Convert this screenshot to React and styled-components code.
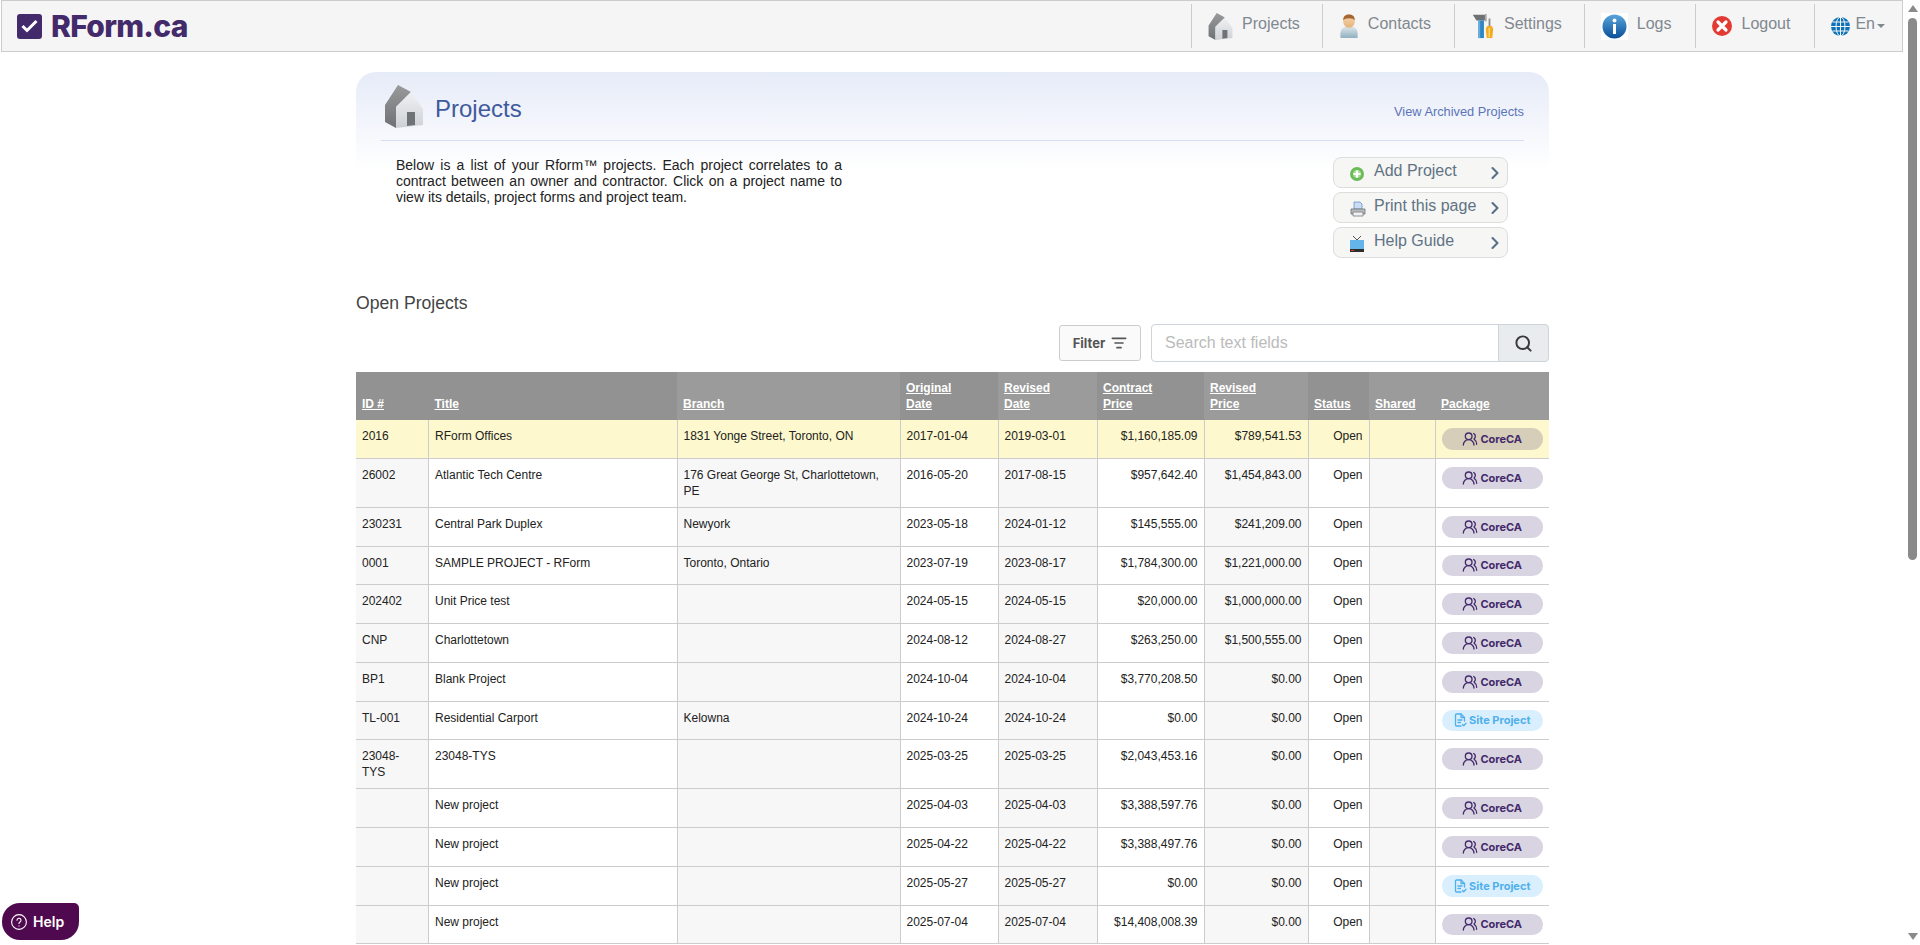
import React from 'react';
import styled, { createGlobalStyle } from 'styled-components';
import { ChevronRight, ListFilter, Search, UsersRound } from 'lucide-react';

const GlobalStyle = createGlobalStyle`
  body {
    margin: 0;
    background: #fff;
    font-family: "Liberation Sans", Arial, sans-serif;
    color: #222;
  }
`;

const Page = styled.div`
  min-height: 1600px;
  padding-right: 15px;
`;

const ScrollRail = styled.div`
  position: fixed;
  top: 0;
  right: 0;
  bottom: 0;
  display: flex;
  flex-direction: column;
  align-items: center;
  justify-content: space-between;
  box-sizing: border-box;
  width: 15px;
  padding: 5px 0;
  background: #fff;
`;

const ScrollThumb = styled.div`
  width: 9px;
  height: 542px;
  margin-bottom: auto;
  margin-top: 6px;
  border-radius: 5px;
  background: #8a8a8a;
`;

const ScrollArrow = styled.div`
  flex: none;
  width: 0;
  height: 0;
  border-left: 5px solid transparent;
  border-right: 5px solid transparent;
  border-bottom: ${props => (props.$down ? '0' : '7px solid #8a8a8a')};
  border-top: ${props => (props.$down ? '7px solid #8a8a8a' : '0')};
`;

const NavBar = styled.nav`
  display: flex;
  align-items: center;
  justify-content: space-between;
  box-sizing: border-box;
  height: 52px;
  margin: 0 2px 0 1px;
  background: #f5f5f5;
  border: 1px solid #ccc;
`;

const Logo = styled.a`
  display: flex;
  align-items: center;
  gap: 9px;
  margin-left: 15px;
  color: #432a6b;
  font-family: Inter, sans-serif;
  font-size: 30px;
  font-weight: 800;
  letter-spacing: -0.7px;
`;

const LogoBox = styled.span`
  display: flex;
  align-items: center;
  justify-content: center;
  width: 25px;
  height: 25px;
  border-radius: 3px;
  background: #432a6b;
`;

const NavList = styled.div`
  display: flex;
  align-items: center;
`;

const NavItem = styled.a`
  display: flex;
  align-items: center;
  gap: ${props => props.$gap || 9}px;
  box-sizing: border-box;
  height: 44px;
  padding: 0 ${props => props.$right || 24}px 0 16px;
  border-left: 1px solid #ccc;
  color: #808890;
  font-size: 16px;
`;

const NavLabel = styled.span`
  margin-top: -4px;
`;

const Caret = styled.span`
  width: 0;
  height: 0;
  margin-left: -3px;
  border-left: 4px solid transparent;
  border-right: 4px solid transparent;
  border-top: 4px solid #808890;
`;

const Container = styled.main`
  width: 1193px;
  margin: 20px auto 0;
`;

const Panel = styled.section`
  padding: 0 25px;
  border-radius: 20px 20px 0 0;
  background: linear-gradient(#e6ebf8, #fff 98px);
`;

const PanelHead = styled.div`
  display: flex;
  align-items: center;
  justify-content: space-between;
  box-sizing: border-box;
  height: 69px;
  padding: 0 0 0 4px;
  border-bottom: 1px solid #d5dff7;
`;

const PanelTitle = styled.h1`
  display: flex;
  align-items: center;
  gap: 12px;
  margin: 0;
  color: #3f5a9c;
  font-size: 24px;
  font-weight: 400;
  span {
    margin-top: 6px;
  }
`;

const ArchiveLink = styled.a`
  margin-top: 11px;
  color: #5b74b8;
  font-size: 12.8px;
`;

const PanelBody = styled.div`
  display: flex;
  justify-content: space-between;
  padding: 16px 16px 0 15px;
`;

const Intro = styled.p`
  width: 446px;
  margin: 0;
  font-size: 14px;
  line-height: 16px;
  text-align: justify;
`;

const ActionList = styled.div`
  display: flex;
  flex-direction: column;
  gap: 4px;
`;

const ActionButton = styled.a`
  display: flex;
  align-items: center;
  box-sizing: border-box;
  width: 175px;
  height: 31px;
  padding: 0 2px 0 16px;
  border: 1px solid #ddd;
  border-radius: 8px;
  background: #f6f6f4;
  color: #5f7384;
  font-size: 16px;
`;

const ActionIcon = styled.span`
  display: flex;
  flex: none;
  width: 24px;
  margin-top: 2px;
`;

const ActionLabel = styled.span`
  flex: 1;
  margin-top: -4px;
`;

const SectionTitle = styled.h2`
  margin: 35px 0 0;
  color: #444;
  font-size: 17.6px;
  font-weight: 400;
  line-height: 20px;
`;

const Toolbar = styled.div`
  display: flex;
  align-items: center;
  justify-content: flex-end;
  gap: 10px;
  margin-top: 11px;
`;

const FilterButton = styled.button`
  display: flex;
  align-items: center;
  justify-content: center;
  gap: 6px;
  width: 82px;
  height: 36px;
  padding: 0;
  border: 1px solid #ccc;
  border-radius: 3px;
  background: #fafafa;
  color: #555;
  font-family: Inter, sans-serif;
  font-size: 13px;
  font-weight: 700;
`;

const SearchGroup = styled.div`
  display: flex;
  width: 398px;
  height: 38px;
`;

const SearchInput = styled.input`
  flex: 1;
  min-width: 0;
  box-sizing: border-box;
  padding: 0 13px;
  border: 1px solid #ced4da;
  border-radius: 4px 0 0 4px;
  font-family: "Liberation Sans", Arial, sans-serif;
  font-size: 16px;
  &::placeholder {
    color: #bbb;
  }
`;

const SearchButton = styled.button`
  display: flex;
  align-items: center;
  justify-content: center;
  width: 51px;
  margin-left: -1px;
  padding: 0;
  border: 1px solid #ced4da;
  border-radius: 0 4px 4px 0;
  background: #e9ecef;
  color: #3a3a3a;
`;

const Table = styled.table`
  width: 100%;
  margin-top: 10px;
  border-collapse: collapse;
  table-layout: fixed;
  font-size: 12px;
  line-height: 16px;
`;

const HeadCell = styled.th`
  padding: 8px 6px;
  background: ${props => (props.$dark ? '#929292' : '#9b9b9b')};
  color: #fff;
  font-weight: 700;
  text-align: left;
  text-decoration: underline;
  vertical-align: bottom;
`;

const Row = styled.tr`
  td {
    background: ${props => (props.$highlight ? '#fdf8cd' : '#fff')};
  }
  td:nth-child(odd) {
    background: ${props => (props.$highlight ? '#fdf8cd' : '#f7f7f7')};
  }
`;

const Cell = styled.td`
  padding: 8px 6px;
  border-bottom: 1px solid #ccc;
  border-left: 1px solid #ccc;
  text-align: ${props => (props.$right ? 'right' : 'left')};
  vertical-align: top;
  &:first-child {
    border-left: 0;
  }
`;

const Badge = styled.span`
  display: flex;
  align-items: center;
  justify-content: center;
  gap: 2px;
  height: 21.75px;
  border-radius: 11px;
  background: ${props => (props.$site ? '#d9effd' : 'rgba(67, 42, 107, 0.2)')};
  color: ${props => (props.$site ? '#4fb0ec' : '#432a6b')};
  font-family: Inter, sans-serif;
  font-size: 11px;
  font-weight: 700;
`;

const HelpButton = styled.button`
  position: fixed;
  left: 2px;
  bottom: 5px;
  display: flex;
  align-items: center;
  gap: 6px;
  width: 77px;
  height: 37px;
  padding: 0 0 0 9px;
  border: 0;
  border-radius: 18px 5px 18px 18px;
  background: #4f0a4f;
  color: #fff;
  font-family: Inter, sans-serif;
  font-size: 14px;
  font-weight: 600;
`;

const HouseIcon = ({ width, height }) => (
  <svg width={width} height={height} viewBox="0 0 38 43">
    <defs>
      <linearGradient id="houseDark" x1="0" y1="0" x2="0" y2="1">
        <stop offset="0" stopColor="#9a9a9c" />
        <stop offset="1" stopColor="#6e7174" />
      </linearGradient>
      <linearGradient id="houseLight" x1="0" y1="0" x2="0" y2="1">
        <stop offset="0" stopColor="#f0f1f3" />
        <stop offset="1" stopColor="#cdd1d6" />
      </linearGradient>
    </defs>
    <path d="M0 20 13 0l13 7-15 15v21L0 37z" fill="url(#houseDark)" />
    <path d="M11 22 26 7l12 17v16l-27 3z" fill="url(#houseLight)" />
    <path d="M22 27h8v13l-8 1z" fill="#6f7376" />
  </svg>
);

const PersonIcon = () => (
  <svg width="20" height="25" viewBox="0 0 21 28">
    <defs>
      <linearGradient id="personBody" x1="0" y1="0" x2="0" y2="1">
        <stop offset="0" stopColor="#dfe7ea" />
        <stop offset="1" stopColor="#8fb0bf" />
      </linearGradient>
      <linearGradient id="personSkin" x1="0" y1="0" x2="0" y2="1">
        <stop offset="0" stopColor="#f6d8ae" />
        <stop offset="1" stopColor="#e6b27c" />
      </linearGradient>
    </defs>
    <path d="M1 27c-1-8 1-12 6-13h7c5 1 7 5 6 13z" fill="url(#personBody)" />
    <ellipse cx="10.500" cy="8" rx="6.500" ry="7.500" fill="url(#personSkin)" />
    <path d="M4 7C4 2 7 .5 10.500.5S17 2 17 7c-2-3-11-3-13 0z" fill="#a5652f" />
  </svg>
);

const ToolsIcon = () => (
  <svg width="24" height="26" viewBox="0 0 24 28">
    <path d="M1 2h14v6H5z" fill="#6f7275" />
    <path d="M14 1h2v8h-2z" fill="#a9abad" />
    <path d="M7 8h6v19H7z" fill="#2f86c4" />
    <path d="M7 8h2v19H7z" fill="#66aedd" />
    <path d="M18 6h2v9h-2z" fill="#8d8f91" />
    <path d="M16.500 14h5l1.500 3-1 10h-6l-1-10z" fill="#f3ac1e" />
    <path d="M18 16h1.500v10H18z" fill="#fbd774" />
  </svg>
);

const InfoIcon = () => (
  <svg width="27" height="27" viewBox="0 0 27 27">
    <defs>
      <linearGradient id="infoBlue" x1="0" y1="0" x2="0" y2="1">
        <stop offset="0" stopColor="#5aa5dc" />
        <stop offset="1" stopColor="#0a4f98" />
      </linearGradient>
    </defs>
    <rect width="27" height="27" fill="#fff" />
    <circle cx="13.500" cy="13.500" r="12" fill="url(#infoBlue)" />
    <circle cx="13.500" cy="7.500" r="2" fill="#fff" />
    <path d="M12 11h3v10h-3z" fill="#fff" />
  </svg>
);

const LogoutIcon = () => (
  <svg width="20" height="20" viewBox="0 0 20 20">
    <circle cx="10" cy="10" r="10" fill="#e23b33" />
    <path d="m6 6 8 8M14 6l-8 8" stroke="#fff" strokeWidth="3.200" strokeLinecap="round" />
  </svg>
);

const GlobeIcon = () => (
  <svg width="19" height="19" viewBox="0 0 19 19" fill="none" stroke="#f5f5f5" strokeWidth="1">
    <circle cx="9.500" cy="9.500" r="9.500" fill="#0d72b8" stroke="none" />
    <ellipse cx="9.500" cy="9.500" rx="4.500" ry="9.500" />
    <path d="M9.500 0v19M0 9.500h19M1.500 5h16M1.500 14h16" />
  </svg>
);

const AddIcon = () => (
  <svg width="14" height="14" viewBox="0 0 14 14">
    <circle cx="7" cy="7" r="7" fill="#6cbb5a" />
    <circle cx="7" cy="7" r="4" fill="#a7dc97" />
    <path d="M5.900 3.500h2.200v2.400h2.400v2.200H8.100v2.400H5.900V8.100H3.500V5.900h2.400z" fill="#fff" />
  </svg>
);

const PrintIcon = () => (
  <svg width="16" height="16" viewBox="0 0 16 16">
    <path d="M4 1h6l2 2v5H4z" fill="#c9dcf5" stroke="#6c8fc0" strokeWidth="0.800" />
    <path d="M1 8h14v5H1z" fill="#b9bcc0" stroke="#6d6f72" strokeWidth="0.800" />
    <path d="M3 11h10v4H3z" fill="#f0f1f3" stroke="#77797c" strokeWidth="0.800" />
  </svg>
);

const GuideIcon = () => (
  <svg width="14" height="16" viewBox="0 0 14 16">
    <path d="m3 0 4 4 4-4" fill="none" stroke="#555" strokeWidth="1" />
    <path d="M0 4h14v12H0z" fill="#63b5ea" />
    <path d="M0 13h14v3H0z" fill="#2d2d2d" />
    <path d="M1 14h3v1H1z" fill="#d33" />
  </svg>
);

const SiteIcon = () => (
  <svg width="13" height="14" viewBox="0 0 13 14" fill="none" stroke="currentColor" strokeWidth="1.300" strokeLinecap="round" strokeLinejoin="round">
    <path d="M7 13H2.500A1 1 0 0 1 1.500 12V2a1 1 0 0 1 1-1H7l3.500 3.500V8" />
    <path d="M7 1v3.500h3.500M4 7h4M4 9.500h2.500M8.500 11.500l1.200 1.200 2.300-2.400" />
  </svg>
);

const navItems = [
  { label: 'Projects', right: 22, icon: <HouseIcon width={25} height={27} /> },
  { label: 'Contacts', right: 23, icon: <PersonIcon /> },
  { label: 'Settings', right: 22, icon: <ToolsIcon /> },
  { label: 'Logs', right: 24, icon: <InfoIcon /> },
  { label: 'Logout', right: 24, icon: <LogoutIcon /> },
];

const actions = [
  { label: 'Add Project', icon: <AddIcon /> },
  { label: 'Print this page', icon: <PrintIcon /> },
  { label: 'Help Guide', icon: <GuideIcon /> },
];

const columns = [
  { width: 72.5, lines: ['ID #'], dark: true },
  { width: 248.5, lines: ['Title'], dark: true },
  { width: 223, lines: ['Branch'] },
  { width: 98, lines: ['Original', 'Date'], dark: true },
  { width: 99, lines: ['Revised', 'Date'] },
  { width: 107, lines: ['Contract', 'Price'], dark: true },
  { width: 104, lines: ['Revised', 'Price'] },
  { width: 61, lines: ['Status'], dark: true },
  { width: 66, lines: ['Shared'] },
  { width: 114, lines: ['Package'] },
];

const projects = [
  ['2016', 'RForm Offices', '1831 Yonge Street, Toronto, ON', '2017-01-04', '2019-03-01', '$1,160,185.09', '$789,541.53'],
  ['26002', 'Atlantic Tech Centre', '176 Great George St, Charlottetown, PE', '2016-05-20', '2017-08-15', '$957,642.40', '$1,454,843.00'],
  ['230231', 'Central Park Duplex', 'Newyork', '2023-05-18', '2024-01-12', '$145,555.00', '$241,209.00'],
  ['0001', 'SAMPLE PROJECT - RForm', 'Toronto, Ontario', '2023-07-19', '2023-08-17', '$1,784,300.00', '$1,221,000.00'],
  ['202402', 'Unit Price test', '', '2024-05-15', '2024-05-15', '$20,000.00', '$1,000,000.00'],
  ['CNP', 'Charlottetown', '', '2024-08-12', '2024-08-27', '$263,250.00', '$1,500,555.00'],
  ['BP1', 'Blank Project', '', '2024-10-04', '2024-10-04', '$3,770,208.50', '$0.00'],
  ['TL-001', 'Residential Carport', 'Kelowna', '2024-10-24', '2024-10-24', '$0.00', '$0.00', true],
  ['23048-TYS', '23048-TYS', '', '2025-03-25', '2025-03-25', '$2,043,453.16', '$0.00'],
  ['', 'New project', '', '2025-04-03', '2025-04-03', '$3,388,597.76', '$0.00'],
  ['', 'New project', '', '2025-04-22', '2025-04-22', '$3,388,497.76', '$0.00'],
  ['', 'New project', '', '2025-05-27', '2025-05-27', '$0.00', '$0.00', true],
  ['', 'New project', '', '2025-07-04', '2025-07-04', '$14,408,008.39', '$0.00'],
];

const App = () => (
  <Page>
    <GlobalStyle />
    <NavBar>
      <Logo>
        <LogoBox>
          <svg width="17" height="14" viewBox="0 0 17 14" fill="none" stroke="#fff" strokeWidth="3">
            <path d="m1.500 7 4.500 4.500L15.500 2" />
          </svg>
        </LogoBox>
        RForm.ca
      </Logo>
      <NavList>
        {navItems.map(item => (
          <NavItem key={item.label} $right={item.right}>
            {item.icon}
            <NavLabel>{item.label}</NavLabel>
          </NavItem>
        ))}
        <NavItem $gap={5} $right={17}>
          <GlobeIcon />
          <NavLabel>En</NavLabel>
          <Caret />
        </NavItem>
      </NavList>
    </NavBar>

    <Container>
      <Panel>
        <PanelHead>
          <PanelTitle>
            <HouseIcon width={38} height={43} />
            <span>Projects</span>
          </PanelTitle>
          <ArchiveLink>View Archived Projects</ArchiveLink>
        </PanelHead>
        <PanelBody>
          <Intro>
            Below is a list of your Rform™ projects. Each project correlates to a contract between an owner and
            contractor. Click on a project name to view its details, project forms and project team.
          </Intro>
          <ActionList>
            {actions.map(action => (
              <ActionButton key={action.label}>
                <ActionIcon>{action.icon}</ActionIcon>
                <ActionLabel>{action.label}</ActionLabel>
                <ChevronRight size={20} strokeWidth={2.5} color="#566e86" />
              </ActionButton>
            ))}
          </ActionList>
        </PanelBody>
      </Panel>

      <SectionTitle>Open Projects</SectionTitle>
      <Toolbar>
        <FilterButton>
          Filter
          <ListFilter size={16} strokeWidth={2.5} />
        </FilterButton>
        <SearchGroup>
          <SearchInput placeholder="Search text fields" />
          <SearchButton>
            <Search size={19} strokeWidth={2.5} />
          </SearchButton>
        </SearchGroup>
      </Toolbar>

      <Table>
        <colgroup>
          {columns.map((col, i) => (
            <col key={i} style={{ width: col.width }} />
          ))}
        </colgroup>
        <thead>
          <tr>
            {columns.map((col, i) => (
              <HeadCell key={i} $dark={col.dark}>
                {col.lines.map((line, j) => (
                  <React.Fragment key={line}>
                    {j > 0 && <br />}
                    {line}
                  </React.Fragment>
                ))}
              </HeadCell>
            ))}
          </tr>
        </thead>
        <tbody>
          {projects.map((p, i) => (
            <Row key={i} $highlight={i === 0}>
              <Cell>{p[0]}</Cell>
              <Cell>{p[1]}</Cell>
              <Cell>{p[2]}</Cell>
              <Cell>{p[3]}</Cell>
              <Cell>{p[4]}</Cell>
              <Cell $right>{p[5]}</Cell>
              <Cell $right>{p[6]}</Cell>
              <Cell $right>Open</Cell>
              <Cell />
              <Cell>
                {p[7] ? (
                  <Badge $site>
                    <SiteIcon />
                    Site Project
                  </Badge>
                ) : (
                  <Badge>
                    <UsersRound size={16} />
                    CoreCA
                  </Badge>
                )}
              </Cell>
            </Row>
          ))}
        </tbody>
      </Table>
    </Container>

    <HelpButton>
      <svg width="16" height="16" viewBox="0 0 16 16" fill="none" stroke="#fff" strokeWidth="1.100" strokeLinecap="round">
        <circle cx="8" cy="8" r="7.400" />
        <path d="M6 6.200a2 2 0 1 1 3 1.800c-.7.400-1 .8-1 1.500M8 11.800v.1" />
      </svg>
      Help
    </HelpButton>

    <ScrollRail>
      <ScrollArrow />
      <ScrollThumb />
      <ScrollArrow $down />
    </ScrollRail>
  </Page>
);

export default App;
